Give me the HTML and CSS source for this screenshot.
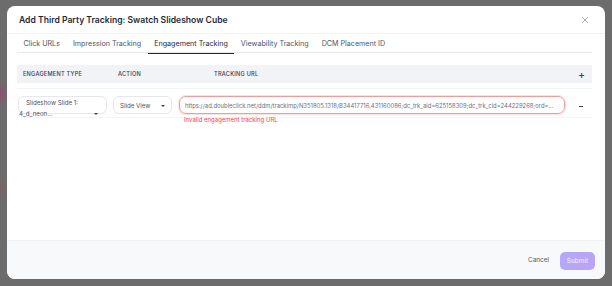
FILE: index.html
```html
<!DOCTYPE html>
<html>
<head>
<meta charset="utf-8">
<link rel="stylesheet" href="styles.css">
</head>
<body>
<div class="backdrop">
  <div class="modal">
    <div class="modal-header">
      <h2 class="title">Add Third Party Tracking: Swatch Slideshow Cube</h2>
      <svg class="close" width="8" height="8" viewBox="0 0 8 8"><path d="M1 1L7 7M7 1L1 7" stroke="#9ca3af" stroke-width="0.9" fill="none"/></svg>
    </div>
    <div class="modal-body">
      <div class="tabs">
        <div class="tab">Click URLs</div>
        <div class="tab">Impression Tracking</div>
        <div class="tab active">Engagement Tracking</div>
        <div class="tab">Viewability Tracking</div>
        <div class="tab">DCM Placement ID</div>
      </div>
      <div class="table">
        <div class="thead">
          <div class="th th-type">Engagement Type</div>
          <div class="th th-action">Action</div>
          <div class="th th-url">Tracking URL</div>
          <div class="th th-add">+</div>
        </div>
        <div class="row">
          <div class="cell cell-type">
            <div class="select select-type">
              <span class="l1">Slideshow Slide 1:</span>
              <span class="l2">4_d_neon...</span>
              <span class="caret caret-type"></span>
            </div>
          </div>
          <div class="cell cell-action">
            <div class="select select-action">
              <span>Slide View</span>
              <span class="caret"></span>
            </div>
          </div>
          <div class="cell cell-url">
            <div class="input invalid">https://ad.doubleclick.net/ddm/trackimp/N351805.1318/B34417716.431160086;dc_trk_aid=625158309;dc_trk_cid=244229268;ord=...</div>
            <div class="error">Invalid engagement tracking URL</div>
          </div>
          <div class="cell cell-remove"><span class="minus"></span></div>
        </div>
      </div>
    </div>
    <div class="modal-footer">
      <button class="btn-cancel">Cancel</button>
      <button class="btn-submit">Submit</button>
    </div>
  </div>
</div>
</body>
</html>
```
FILE: styles.css
```css
* { box-sizing: border-box; }
html, body { margin: 0; padding: 0; }
body {
  font-family: Inter, "Noto Sans", sans-serif;
  background: #6b6b6b;
  width: 612px;
  height: 286px;
  overflow: hidden;
}
.backdrop {
  width: 612px;
  height: 286px;
  padding: 6px 7px 7px 7px;
  background:
    radial-gradient(ellipse 10px 14px at 0px 93px, rgba(150, 70, 110, 0.7), rgba(150,70,110,0) 100%),
    radial-gradient(ellipse 8px 12px at 0px 190px, rgba(140, 90, 90, 0.4), rgba(140,90,90,0) 100%),
    #6c6c6c;
}
.modal {
  background: #fff;
  border-radius: 8px;
  height: 273px;
  display: flex;
  flex-direction: column;
  overflow: hidden;
}
.modal-header {
  height: 28px;
  flex: none;
  display: flex;
  align-items: center;
  justify-content: space-between;
  padding: 0 16px 0 12px;
  border-bottom: 1px solid #f1f3f5;
}
.title {
  margin: 0;
  font-size: 8.6px;
  font-weight: 600;
  color: #1f2937;
}
.close { display: block; margin-top: 1px; }
.modal-body {
  flex: 1;
  padding: 0 13px 0 10px;
}
.tabs {
  display: flex;
  height: 19px;
  border-bottom: 1px solid #e5e7eb;
}
.tab {
  padding: 0 6.5px;
  font-size: 7.15px;
  color: #4b5563;
  display: flex;
  align-items: center;
  height: 19px;
}
.tab.active {
  color: #1f2937;
  border-bottom: 1.5px solid #1f2937;
  height: 19.5px;
  padding-top: 1px;
}
.table { margin-top: 12px; }
.thead {
  display: flex;
  align-items: center;
  height: 18px;
  background: #f1f3f6;
}
.th {
  flex: none;
  font-size: 5.6px;
  font-weight: 500;
  color: #374151;
  text-transform: uppercase;
  letter-spacing: 0.25px;
}
.th-type { width: 95px; padding-left: 6px; }
.th-action { width: 67px; padding-left: 6px; }
.th-url { flex: 1; padding-left: 35px; }
.th-add {
  width: 27px;
  font-size: 10px;
  font-weight: 500;
  color: #374151;
  text-align: center;
  letter-spacing: 0;
  padding-left: 6px;
}
.row {
  display: flex;
  border-top: 1px solid #f3f4f6;
  border-bottom: 1px solid #f3f4f6;
  margin-top: 5px;
  height: 30px;
  padding-top: 7px;
}
.cell { flex: none; }
.cell-type { width: 95px; padding-left: 1px; }
.cell-action { width: 67px; padding-left: 1px; }
.cell-url { flex: 1; min-width: 0; }
.cell-remove { width: 27px; display: flex; justify-content: center; padding-top: 8px; padding-left: 5px; }
.select {
  position: relative;
  height: 18px;
  border: 1px solid #e5e7eb;
  border-radius: 6px;
  font-size: 6.2px;
  color: #4b5563;
}
.select-type { width: 89px; }
.select-type .l1 { position: absolute; left: 7px; top: 2px; }
.select-type .l2 { position: absolute; left: 0px; top: 13px; }
.select-action {
  width: 59px;
  display: flex;
  align-items: center;
  padding-left: 6px;
}
.caret {
  position: absolute;
  right: 6px;
  top: 7.5px;
  width: 0; height: 0;
  border-left: 2px solid transparent;
  border-right: 2px solid transparent;
  border-top: 2.5px solid #374151;
}
.caret-type { right: 8px; top: 16px; }
.input {
  width: 100%;
  height: 18px;
  border: 1px solid #f39b9b;
  border-radius: 7px;
  box-shadow: 0 0 0 1px rgba(252, 165, 165, 0.35);
  font-size: 5.9px;
  color: #6b7280;
  display: flex;
  align-items: center;
  padding-left: 5px;
  white-space: nowrap;
  overflow: hidden;
}
.error {
  font-size: 6px;
  color: #ef4444;
  margin-top: 2px;
  padding-left: 5px;
}
.minus {
  display: block;
  width: 4px;
  height: 1.2px;
  background: #374151;
  margin-top: 2px;
}
.modal-footer {
  height: 39px;
  flex: none;
  background: #f8f9fb;
  border-top: 1px solid #f1f3f5;
  display: flex;
  align-items: center;
  justify-content: flex-end;
  padding: 0 10px 0 0;
  gap: 11px;
}
.btn-cancel {
  border: 0;
  background: transparent;
  font-family: inherit;
  font-size: 6.4px;
  color: #4b5563;
  padding: 0;
}
.btn-submit {
  border: 0;
  font-family: inherit;
  font-size: 6.4px;
  font-weight: 500;
  color: #ece8ff;
  background: linear-gradient(90deg, #b3a8fa, #bba3f4);
  border-radius: 5px;
  width: 35px;
  height: 18px;
  padding: 0;
  margin-top: 2px;
}
```
